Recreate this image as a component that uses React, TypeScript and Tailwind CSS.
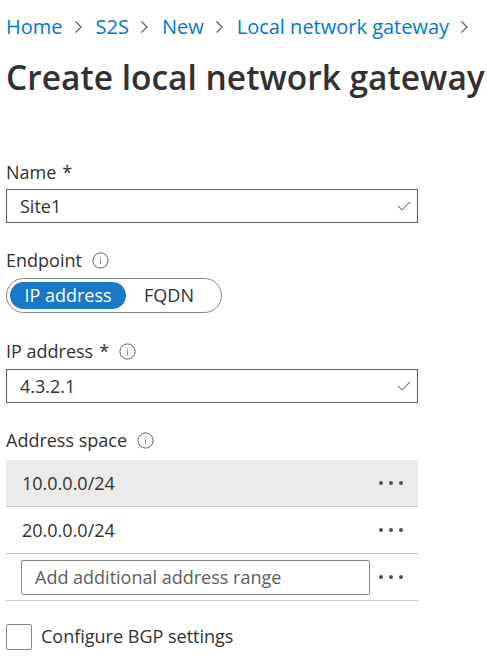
import React from 'react'

const font = { fontFamily: '"Open Sans", "Noto Sans", sans-serif' }

function Chevron() {
  return (
    <svg width="8" height="14" viewBox="0 0 8 14" className="ml-[11px] mr-[14px]" fill="none">
      <path d="M1.5 1.5l5.5 5.5-5.5 5.5" stroke="#605e5c" strokeWidth="1.2" />
    </svg>
  )
}

function InfoIcon() {
  return (
    <svg width="17" height="17" viewBox="0 0 17 17" fill="none" className="ml-[10px]">
      <circle cx="8.5" cy="8.5" r="7.6" stroke="#605e5c" strokeWidth="1" />
      <path d="M8.5 7.3v5" stroke="#8a8886" strokeWidth="1" />
      <circle cx="8.5" cy="5.2" r="0.65" fill="#8a8886" />
    </svg>
  )
}

function Check() {
  return (
    <svg width="14" height="10" viewBox="0 0 14 10" fill="none">
      <path d="M1 5l4 4 8-8" stroke="#8a8886" strokeWidth="1.1" />
    </svg>
  )
}

function Dots() {
  return (
    <div className="flex items-center gap-[6px] pr-[15px]">
      <span className="w-[4px] h-[4px] rounded-full bg-[#544a5e]" />
      <span className="w-[4px] h-[4px] rounded-full bg-[#544a5e]" />
      <span className="w-[4px] h-[4px] rounded-full bg-[#544a5e]" />
    </div>
  )
}

function Label({ text, required, info }: { text: string; required?: boolean; info?: boolean }) {
  return (
    <div className="flex items-center h-[24px] text-[18px] text-[#323130]">
      <span>{text}</span>
      {required && <span className="ml-[6px]">*</span>}
      {info && <InfoIcon />}
    </div>
  )
}

function TextBox({ value }: { value: string }) {
  return (
    <div className="flex items-center justify-between w-[412px] h-[34px] border border-[#605e5c] pl-[13px] pr-[6px] text-[18px] text-[#323130]">
      <span>{value}</span>
      <Check />
    </div>
  )
}

export default function App() {
  const crumbs = ['Home', 'S2S', 'New', 'Local network gateway']

  return (
    <div className="w-[487px] h-[662px] overflow-hidden bg-white pl-[6px]" style={font}>
      {/* Breadcrumb */}
      <div className="flex items-center pt-[14px] h-[40px] text-[20px] text-[#0078d4] whitespace-nowrap">
        {crumbs.map((c) => (
          <React.Fragment key={c}>
            <span className="leading-[26px]">{c}</span>
            <Chevron />
          </React.Fragment>
        ))}
      </div>

      <h1 className="mt-[17px] text-[33.5px] leading-[40px] font-semibold text-[#323130] whitespace-nowrap">
        Create local network gateway
      </h1>

      {/* Name */}
      <div className="mt-[63px]">
        <Label text="Name" required />
        <div className="mt-[5px]">
          <TextBox value="Site1" />
        </div>
      </div>

      {/* Endpoint */}
      <div className="mt-[25px]">
        <Label text="Endpoint" info />
        <div className="mt-[6px] flex items-center w-[216px] h-[35px] border border-[#8a8886] rounded-full px-[3px]">
          <div className="flex items-center justify-center w-[116px] h-[27px] rounded-full bg-[#1a78c8] text-white text-[18px]">
            IP address
          </div>
          <div className="flex-1 flex items-center justify-center text-[18px] text-[#323130] pr-[6px]">FQDN</div>
        </div>
      </div>

      {/* IP address */}
      <div className="mt-[26px]">
        <Label text="IP address" required info />
        <div className="mt-[6px]">
          <TextBox value="4.3.2.1" />
        </div>
      </div>

      {/* Address space */}
      <div className="mt-[25px]">
        <Label text="Address space" info />
        <div className="mt-[8px] w-[412px]">
          <div className="flex items-center justify-between h-[47px] bg-[#edebe9] border-b border-[#c8c6c4] pl-[16px] text-[18px] text-[#323130]">
            <span>10.0.0.0/24</span>
            <Dots />
          </div>
          <div className="flex items-center justify-between h-[47px] border-b border-[#c8c6c4] pl-[16px] text-[18px] text-[#323130]">
            <span>20.0.0.0/24</span>
            <Dots />
          </div>
          <div className="flex items-center justify-between h-[47px] border-b border-[#c8c6c4] pl-[15px]">
            <div className="flex items-center w-[349px] h-[35px] border border-[#8a8886] rounded-[2px] pl-[13px] text-[18px] text-[#605e5c]">
              Add additional address range
            </div>
            <Dots />
          </div>
        </div>
      </div>

      {/* BGP */}
      <div className="mt-[22px] flex items-center">
        <div className="w-[26px] h-[26px] border border-[#8a8886] rounded-[2px]" />
        <span className="ml-[9px] text-[18px] text-[#323130]">Configure BGP settings</span>
      </div>
    </div>
  )
}
